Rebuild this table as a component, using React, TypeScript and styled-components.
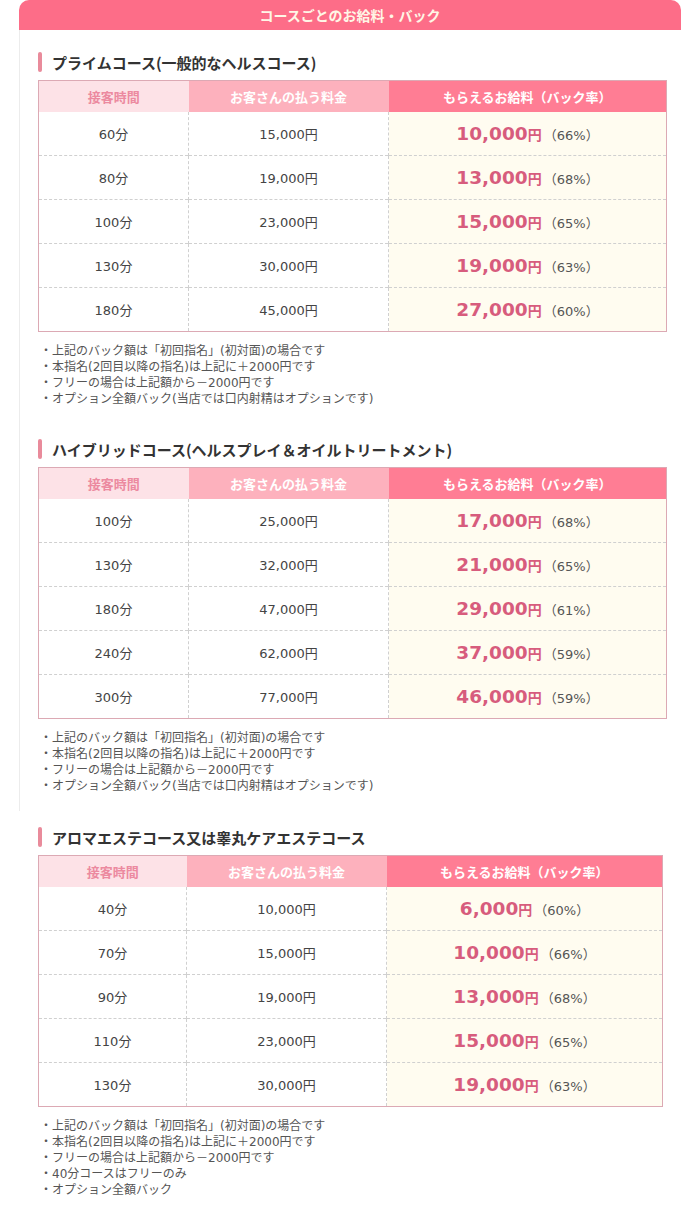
import styled, { createGlobalStyle } from 'styled-components';

// data
interface IRow {
  time: string;
  price: string;
  pay: string;
  rate: string;
}
interface ICourse {
  title: string;
  rows: IRow[];
  notes: string[];
}

const baseNotes = [
  '・上記のバック額は「初回指名」(初対面)の場合です',
  '・本指名(2回目以降の指名)は上記に＋2000円です',
  '・フリーの場合は上記額から－2000円です',
];

const courses: ICourse[] = [
  {
    title: 'プライムコース(一般的なヘルスコース)',
    rows: [
      { time: '60分', price: '15,000円', pay: '10,000', rate: '66%' },
      { time: '80分', price: '19,000円', pay: '13,000', rate: '68%' },
      { time: '100分', price: '23,000円', pay: '15,000', rate: '65%' },
      { time: '130分', price: '30,000円', pay: '19,000', rate: '63%' },
      { time: '180分', price: '45,000円', pay: '27,000', rate: '60%' },
    ],
    notes: [...baseNotes, '・オプション全額バック(当店では口内射精はオプションです)'],
  },
  {
    title: 'ハイブリッドコース(ヘルスプレイ＆オイルトリートメント)',
    rows: [
      { time: '100分', price: '25,000円', pay: '17,000', rate: '68%' },
      { time: '130分', price: '32,000円', pay: '21,000', rate: '65%' },
      { time: '180分', price: '47,000円', pay: '29,000', rate: '61%' },
      { time: '240分', price: '62,000円', pay: '37,000', rate: '59%' },
      { time: '300分', price: '77,000円', pay: '46,000', rate: '59%' },
    ],
    notes: [...baseNotes, '・オプション全額バック(当店では口内射精はオプションです)'],
  },
  {
    title: 'アロマエステコース又は睾丸ケアエステコース',
    rows: [
      { time: '40分', price: '10,000円', pay: '6,000', rate: '60%' },
      { time: '70分', price: '15,000円', pay: '10,000', rate: '66%' },
      { time: '90分', price: '19,000円', pay: '13,000', rate: '68%' },
      { time: '110分', price: '23,000円', pay: '15,000', rate: '65%' },
      { time: '130分', price: '30,000円', pay: '19,000', rate: '63%' },
    ],
    notes: [...baseNotes, '・40分コースはフリーのみ', '・オプション全額バック'],
  },
];

// style
const GlobalStyle = createGlobalStyle`
  body {
    margin: 0;
    background: #fff;
    font-family: "DejaVu Sans", "Noto Sans CJK JP", sans-serif;
    color: #444;
  }
`;
const Wrapper = styled.div`
  width: 662px;
  margin-left: 19px;
  padding-bottom: 24px;
`;
const Header = styled.h1`
  margin: 0;
  height: 30px;
  line-height: 30px;
  background: #fd6d88;
  border-radius: 10px 10px 0 0;
  color: #fff6e6;
  font-family: "Noto Sans CJK JP", sans-serif;
  font-size: 14px;
  font-weight: 700;
  text-align: center;
`;
const Card = styled.div`
  border-left: 1px solid #ececec;
  padding: 22px 13px 17px 18px;
  display: flex;
  flex-direction: column;
  gap: 32px;
`;
const Outside = styled.div`
  padding: 16px 13px 0 19px;
`;
const Section = styled.section<{ narrow?: boolean }>`
  width: ${(props) => (props.narrow ? '625px' : '629px')};
`;
const Title = styled.h2`
  display: flex;
  align-items: center;
  gap: 10px;
  margin: 0 0 8px;
  height: 20px;
  font-family: "Noto Sans CJK JP", sans-serif;
  font-size: 15px;
  font-weight: 700;
  color: #333;
  &::before {
    content: '';
    width: 4px;
    height: 20px;
    border-radius: 2px;
    background: #e98b9b;
  }
`;
const Table = styled.table`
  width: 100%;
  border-collapse: collapse;
  table-layout: fixed;
  border: 1px solid #dca9b4;
`;
const headColors = {
  time: { bg: '#fde2e7', fg: '#ec8aa0' },
  price: { bg: '#fdb1bd', fg: '#fff' },
  pay: { bg: '#ff7d94', fg: '#fff' },
};
type Kind = keyof typeof headColors;
const HeadCell = styled.th<{ kind: Kind }>`
  height: 31px;
  padding: 0;
  background: ${(props) => headColors[props.kind].bg};
  color: ${(props) => headColors[props.kind].fg};
  font-family: "Noto Sans CJK JP", sans-serif;
  font-size: 13px;
  font-weight: 700;
  text-align: center;
`;
const Cell = styled.td<{ kind: Kind }>`
  height: 43px;
  padding: 0;
  text-align: center;
  font-size: 13px;
  color: #444;
  background: ${(props) => (props.kind === 'pay' ? '#fffcf0' : '#fff')};
  border-top: 1px dashed #d0d0d0;
  border-left: ${(props) => (props.kind === 'time' ? 'none' : '1px dashed #d0d0d0')};
  tr:first-child > & {
    border-top: none;
  }
`;
const Amount = styled.span`
  font-size: 18.5px;
  font-weight: 700;
  color: #d75c7d;
`;
const Yen = styled.span`
  font-family: "Noto Sans CJK JP", sans-serif;
  font-size: 14px;
  font-weight: 700;
  color: #d75c7d;
`;
const Rate = styled.span`
  margin-left: 2px;
  font-size: 13px;
  color: #555;
`;
const Notes = styled.ul`
  list-style: none;
  margin: 11px 0 0;
  padding: 0 0 0 2px;
  font-size: 12px;
  line-height: 16px;
  color: #555;
`;

function Course({ course, narrow }: { course: ICourse; narrow?: boolean }) {
  return (
    <Section narrow={narrow}>
      <Title>{course.title}</Title>
      <Table>
        <colgroup>
          <col style={{ width: narrow ? 148 : 150 }} />
          <col style={{ width: 200 }} />
          <col />
        </colgroup>
        <thead>
          <tr>
            <HeadCell kind="time">接客時間</HeadCell>
            <HeadCell kind="price">お客さんの払う料金</HeadCell>
            <HeadCell kind="pay">もらえるお給料（バック率）</HeadCell>
          </tr>
        </thead>
        <tbody>
          {course.rows.map((row) => (
            <tr key={row.time}>
              <Cell kind="time">{row.time}</Cell>
              <Cell kind="price">{row.price}</Cell>
              <Cell kind="pay">
                <Amount>{row.pay}</Amount>
                <Yen>円</Yen>
                <Rate>（{row.rate}）</Rate>
              </Cell>
            </tr>
          ))}
        </tbody>
      </Table>
      <Notes>
        {course.notes.map((note) => (
          <li key={note}>{note}</li>
        ))}
      </Notes>
    </Section>
  );
}

function App() {
  return (
    <>
      <GlobalStyle />
      <Wrapper>
        <Header>コースごとのお給料・バック</Header>
        <Card>
          <Course course={courses[0]} />
          <Course course={courses[1]} />
        </Card>
        <Outside>
          <Course course={courses[2]} narrow />
        </Outside>
      </Wrapper>
    </>
  );
}

export default App;
